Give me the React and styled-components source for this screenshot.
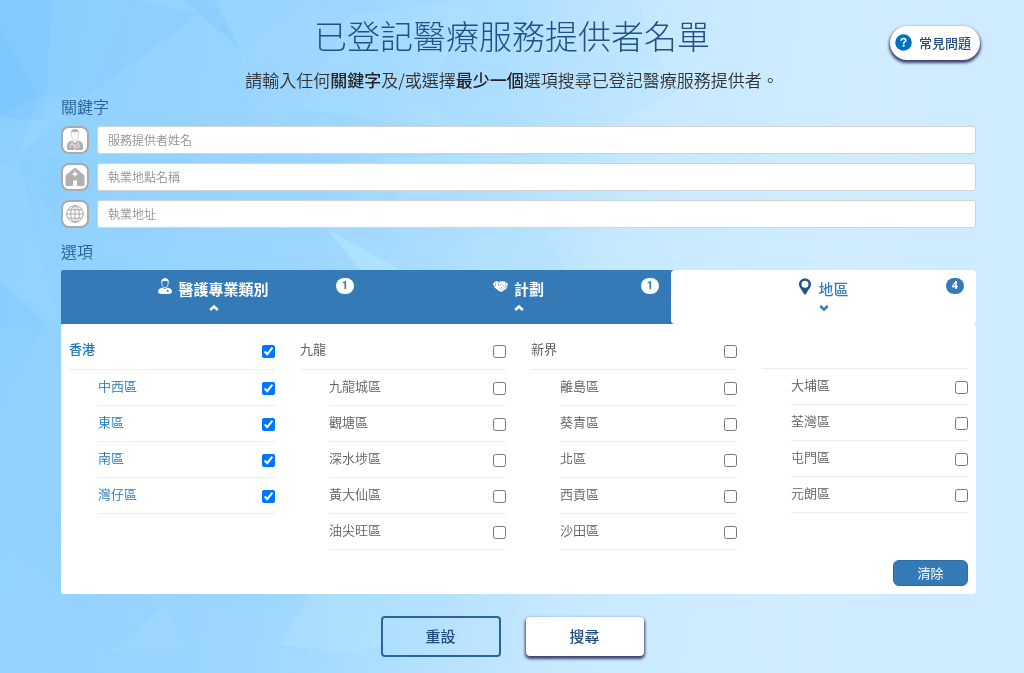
import React, { useState } from "react";
import styled, { createGlobalStyle, css } from "styled-components";

const GlobalStyle = createGlobalStyle`
  * { box-sizing: border-box; }
  body {
    margin: 0;
    background: #b4e0ff;
    font-family: "Noto Sans CJK TC", sans-serif;
    color: #333;
  }
  button, input { font-family: inherit; }
`;

const Backdrop = styled.svg`
  position: fixed;
  inset: 0;
  z-index: -1;
  width: 100%;
  height: 100%;
`;

const Header = styled.header`
  display: grid;
  grid-template-columns: 1fr auto 1fr;
  padding: 12px 44px 0;
`;

const Title = styled.h1`
  grid-column: 2;
  margin: 0;
  font-size: 33px;
  line-height: 46px;
  font-weight: 300;
  color: #1f5086;
`;

const FaqLink = styled.a`
  justify-self: end;
  margin-top: 14px;
  height: 34px;
  padding: 0 9px 2px 5px;
  display: flex;
  align-items: center;
  gap: 7px;
  border-radius: 17px;
  background: #fff;
  box-shadow: 0 2px 3px 1px #404070;
  color: #1f4d80;
  font-size: 13px;
  font-weight: 500;
  text-decoration: none;
`;

const Intro = styled.p`
  margin: 8px 0 0;
  text-align: center;
  font-size: 17px;
  line-height: 24px;
  font-weight: 350;
  strong { font-weight: 500; color: #222; }
`;

const Main = styled.main`
  padding: 0 48px 0 61px;
`;

const SectionTitle = styled.h2`
  margin: ${(p) => p.$top}px 0 0;
  font-size: 16px;
  line-height: 24px;
  font-weight: 350;
  color: #2a5f8f;
`;

const Fields = styled.div`
  display: grid;
  gap: 9px;
  margin-top: 8px;
`;

const Field = styled.label`
  display: flex;
  align-items: center;
  gap: 8px;
`;

const FieldIcon = styled.span`
  flex: none;
  width: 28px;
  height: 28px;
  display: grid;
  place-items: center;
  border: 2px solid #aaa;
  border-radius: 8px;
  background: #fff;
`;

const TextInput = styled.input`
  flex: 1;
  min-width: 0;
  height: 28px;
  padding: 0 10px 2px;
  border: 1px solid #d2d2d2;
  border-radius: 3px;
  background: #fff;
  font-size: 12px;
  &::placeholder { color: #909090; font-weight: 350; }
`;

const Tabs = styled.div`
  display: grid;
  grid-template-columns: repeat(3, 1fr);
  margin-top: 7px;
  border-radius: 3px 3px 0 0;
  background: linear-gradient(to right, #337ab7 90%, transparent 90%);
`;

const Tab = styled.button`
  position: relative;
  height: 54px;
  padding: 8px 0 0;
  display: flex;
  flex-direction: column;
  align-items: center;
  border: 0;
  border-radius: 4px;
  font-size: 15px;
  font-weight: 700;
  background: #337ab7;
  color: #fff;
  ${(p) => p.$active && css`
    background: #fff;
    color: #337ab7;
    font-weight: 500;
  `}
`;

const TabLabel = styled.span`
  display: flex;
  gap: 6px;
  line-height: 22px;
`;

const TabBadge = styled.span`
  position: absolute;
  top: 8px;
  right: 12px;
  width: 18px;
  height: 16px;
  border-radius: 8px;
  font: 700 11px/16px Roboto, sans-serif;
  text-align: center;
  background: ${(p) => (p.$active ? "#337ab7" : "#fff")};
  color: ${(p) => (p.$active ? "#fff" : "#337ab7")};
`;

const Panel = styled.section`
  padding: 0 8px 8px;
  border-radius: 3px;
  background: #fff;
`;

const Regions = styled.div`
  display: grid;
  grid-template-columns: repeat(4, 1fr);
  gap: 25px;
`;

const RegionBlank = styled.div`
  height: 45px;
  border-bottom: 1px solid #eee;
`;

const Option = styled.label`
  display: flex;
  align-items: center;
  justify-content: space-between;
  height: 36px;
  margin-left: 29px;
  padding-bottom: 4px;
  border-bottom: 1px solid #eee;
  font-size: 13px;
  font-weight: 350;
  color: ${(p) => (p.$on ? "#1f78b8" : "#606060")};
  ${(p) => p.$heading && css`
    height: 46px;
    margin-left: 0;
    padding-top: 8px;
    font-weight: ${p.$on ? 500 : 400};
  `}
  input { width: 13px; height: 13px; margin: 6px 0 0; }
`;

const PanelFooter = styled.div`
  display: flex;
  justify-content: flex-end;
  margin-top: 10px;
`;

const ClearButton = styled.button`
  width: 75px;
  height: 26px;
  padding: 0 0 2px;
  border: 1px solid #2e6da4;
  border-radius: 6px;
  background: #337ab7;
  color: #fff;
  font-size: 13px;
`;

const Actions = styled.div`
  display: flex;
  align-items: center;
  justify-content: center;
  gap: 25px;
  padding: 22px 0 16px;
`;

const ActionButton = styled.button`
  width: 120px;
  height: 41px;
  padding: 0 0 2px;
  border: 2px solid #2a649c;
  border-radius: 4px;
  background: transparent;
  color: #1f4d80;
  font-size: 15px;
  font-weight: 500;
  ${(p) => p.$raised && css`
    width: 118px;
    height: 39px;
    border-color: #fff;
    background: #fff;
    box-shadow: 0 2px 3px 1px #404070;
  `}
`;

const FACETS = [
  ["0,0 52,0 45,120 0,118", "#78c4ff", 0.4],
  ["52,0 135,0 85,98 45,120", "#84ccff", 0.4],
  ["135,0 200,14 85,98", "#84caff", 0.4],
  ["0,28 38,96 0,116", "#72c2ff", 0.4],
  ["183,0 215,0 240,50 200,14", "#7cc8ff", 0.4],
  ["38,96 85,98 17,157", "#a0daff", 0.3],
  ["0,168 17,157 58,325 0,282", "#a4dcff", 0.2],
  ["17,157 118,158 60,230", "#88ceff", 0.15],
  ["0,282 46,325 0,328", "#80caff", 0.4],
  ["0,328 46,325 0,396", "#86ceff", 0.3],
  ["62,520 10,552 62,594 0,594 0,560", "#a0daff", 0.2],
  ["0,594 70,594 52,673 0,673", "#98d6ff", 0.4],
  ["70,594 165,606 108,652", "#94d2ff", 0.2],
  ["108,652 165,606 184,647", "#a8dcff", 0.3],
  ["165,606 270,594 250,634 184,647", "#a0d8ff", 0.3],
  ["310,594 440,594 365,655 280,645", "#b8e6fa", 0.35],
  ["240,50 305,0 350,15 300,110 255,140", "#b0e0ff", 0.15],
  ["350,15 480,0 420,100 470,130 300,110", "#c0e8ff", 0.15],
  ["480,0 560,0 520,60 612,125 470,130", "#a8dcff", 0.15],
  ["560,0 640,0 650,50 520,60", "#b4e2ff", 0.25],
  ["520,60 650,50 680,90 612,125", "#b0e0ff", 0.25],
  ["380,158 480,154 640,160 400,200", "#c0eaff", 0.25],
  ["326,228 400,270 360,270", "#bce8ff", 0.5],
  ["326,228 345,228 425,270 400,270", "#a8deff", 0.3],
  ["480,228 545,228 565,270 480,270", "#b0e2fc", 0.5],
];

function PolyBackdrop() {
  return (
    <Backdrop viewBox="0 0 1024 673" preserveAspectRatio="none" aria-hidden="true">
      <defs>
        <linearGradient id="sky" gradientUnits="userSpaceOnUse" x1="0" y1="60" x2="1000" y2="240">
          <stop offset="0" stopColor="#8acfff" />
          <stop offset="0.15" stopColor="#94d3ff" />
          <stop offset="0.34" stopColor="#9cd6ff" />
          <stop offset="0.48" stopColor="#aedeff" />
          <stop offset="0.64" stopColor="#c7e9ff" />
          <stop offset="0.85" stopColor="#d1ecff" />
          <stop offset="1" stopColor="#ceebff" />
        </linearGradient>
      </defs>
      <rect width="1024" height="673" fill="url(#sky)" />
      {FACETS.map(([points, fill, opacity]) => (
        <polygon key={points} points={points} fill={fill} opacity={opacity} />
      ))}
    </Backdrop>
  );
}

const DoctorIcon = () => (
  <svg width="20" height="24" viewBox="0 0 20 24" aria-hidden="true">
    <path d="M6 6.500C5.600 3 7.200 1 10 1s4.400 2 4 5.500c-.5-1.500-1.300-2.500-2-2.700-1.500.8-3.500.6-4.700.2C6.600 4.500 6.300 5.500 6 6.500z" fill="#b4b4b4" />
    <path d="M6.400 5.500c0 4 1.600 6.500 3.600 6.500s3.600-2.500 3.600-6.500" fill="none" stroke="#ccc" strokeWidth="0.8" />
    <path d="M7.300 12.200 10 15l2.700-2.800c3.600 1 5.300 2.300 5.300 5.800V20.500q0 1.500-1.500 1.500h-13Q2 22 2 20.500V18c0-3.500 1.700-4.800 5.300-5.800z" fill="#b0b0b0" />
    <path d="M7 13.500v3.200m-2 2.800v-1.300a2 2 0 0 1 4 0v1.300M13 13.500v3m0 0a1.500 1.500 0 1 0 .1 0M10 16v6" fill="none" stroke="#fff" strokeWidth="0.7" />
  </svg>
);

const ClinicIcon = () => (
  <svg width="20" height="20" viewBox="0 0 20 20" aria-hidden="true">
    <path d="M10 1 19 8.500V18.500H12.500V13h-5v5.500H1V8.500z" fill="#b0b0b0" stroke="#b0b0b0" strokeLinejoin="round" />
    <path d="M10 4.500v5M7.500 7h5" stroke="#fff" strokeWidth="1.500" />
  </svg>
);

const GlobeIcon = () => (
  <svg width="18" height="18" viewBox="0 0 18 18" fill="none" stroke="#aaa" strokeWidth="1" aria-hidden="true">
    <circle cx="9" cy="9" r="8.300" />
    <ellipse cx="9" cy="9" rx="4.300" ry="8.300" />
    <path d="M9 .7v16.600M.7 9h16.600M2 4.800h14M2 13.200h14" />
  </svg>
);

const DoctorTabIcon = () => (
  <svg width="14" height="18" viewBox="0 0 14 18" aria-hidden="true">
    <path d="M3.800 5C3.300 2 4.500.6 7 .6S10.700 2 10.200 5c0 2.600-1.400 4.600-3.200 4.600S3.800 7.600 3.800 5z" fill="none" stroke="#fff" strokeWidth="0.8" />
    <path d="M3.600 4C3.500 1.600 4.800.4 7 .4s3.500 1.200 3.400 3.600C9 2.800 5 2.800 3.600 4z" fill="#fff" />
    <path d="M4.500 9.500 7 11l2.500-1.500c3 .8 4.500 2 4.500 4 0 2-1.500 2.500-7 2.500s-7-.5-7-2.500c0-2 1.500-3.200 4.500-4z" fill="#fff" />
    <circle cx="9.700" cy="12.800" r="1" fill="#337ab7" />
  </svg>
);

const HandshakeIcon = () => (
  <svg width="15" height="16" viewBox="0 0 15 16" aria-hidden="true">
    <path d="M0 5.500 3 3l3 1 2-.8 4 .3 3 2.300-1.500 4.700L8.500 14 6 13 1.500 9.500z" fill="#fff" />
    <path d="M6.500 4 5 7l1.500.6L8.500 6l4.500 4M8 9l2.500 2.700M6.300 10.300l2 2.200M2.800 4.500 2.300 9M12.500 4.500l.8 4.500" fill="none" stroke="#337ab7" strokeWidth="0.5" />
  </svg>
);

const PinIcon = () => (
  <svg width="14" height="18" viewBox="0 0 14 18" aria-hidden="true">
    <path fillRule="evenodd" d="M7 .5c3.500 0 6 2.500 6 5.800 0 3-2.600 5.200-4.600 9.300Q7 17.500 5.600 15.600C3.600 11.500 1 9.300 1 6.300 1 3 3.500.5 7 .5zM7 2.700a3.500 3.500 0 1 0 0 7 3.500 3.500 0 0 0 0-7z" fill="#225388" />
  </svg>
);

const Chevron = ({ up }) => (
  <svg width="10" height="16" viewBox="0 0 10 16" aria-hidden="true">
    <path d={up ? "M1.200 10 5 6.500 8.800 10" : "M1.200 6 5 9.500 8.800 6"} fill="none" stroke="currentColor" strokeWidth="2.400" />
  </svg>
);

const QuestionIcon = () => (
  <svg width="17" height="17" viewBox="0 0 17 17" aria-hidden="true">
    <circle cx="8.500" cy="8.500" r="8.300" fill="#0072bc" />
    <path d="M6.200 6.700c.1-3 4.700-2.800 4.600-.3-.1 1.600-2.200 1.500-2.200 3.300" fill="none" stroke="#fff" strokeWidth="1.700" />
    <rect x="7.700" y="10.700" width="1.900" height="1.900" fill="#fff" />
  </svg>
);

const FIELDS = [
  { name: "provider", label: "服務提供者姓名", Icon: DoctorIcon },
  { name: "place", label: "執業地點名稱", Icon: ClinicIcon },
  { name: "address", label: "執業地址", Icon: GlobeIcon },
];

const TABS = [
  { label: "醫護專業類別", count: 1, Icon: DoctorTabIcon },
  { label: "計劃", count: 1, Icon: HandshakeIcon },
  { label: "地區", count: 4, Icon: PinIcon, active: true },
];

const REGIONS = [
  { name: "香港", districts: ["中西區", "東區", "南區", "灣仔區"] },
  { name: "九龍", districts: ["九龍城區", "觀塘區", "深水埗區", "黃大仙區", "油尖旺區"] },
  { name: "新界", districts: ["離島區", "葵青區", "北區", "西貢區", "沙田區"] },
  { name: null, districts: ["大埔區", "荃灣區", "屯門區", "元朗區"] },
];

const INITIAL = ["香港", "中西區", "東區", "南區", "灣仔區"];

export default function App() {
  const [picked, setPicked] = useState(() => new Set(INITIAL));
  const toggle = (name) =>
    setPicked((prev) => {
      const next = new Set(prev);
      if (!next.delete(name)) next.add(name);
      return next;
    });
  const option = (name, heading) => (
    <Option key={name} $heading={heading} $on={picked.has(name)}>
      {name}
      <input type="checkbox" checked={picked.has(name)} onChange={() => toggle(name)} />
    </Option>
  );

  return (
    <>
      <GlobalStyle />
      <PolyBackdrop />
      <Header>
        <Title>已登記醫療服務提供者名單</Title>
        <FaqLink href="#faq">
          <QuestionIcon />
          常見問題
        </FaqLink>
      </Header>
      <Intro>
        請輸入任何<strong>關鍵字</strong>及/或選擇<strong>最少一個</strong>選項搜尋已登記醫療服務提供者。
      </Intro>
      <Main>
        <SectionTitle $top={2}>關鍵字</SectionTitle>
        <Fields>
          {FIELDS.map(({ name, label, Icon }) => (
            <Field key={name}>
              <FieldIcon><Icon /></FieldIcon>
              <TextInput type="text" name={name} placeholder={label} aria-label={label} />
            </Field>
          ))}
        </Fields>
        <SectionTitle $top={11}>選項</SectionTitle>
        <Tabs role="tablist">
          {TABS.map(({ label, count, Icon, active }) => (
            <Tab key={label} type="button" role="tab" aria-selected={!!active} $active={active}>
              <TabLabel><Icon />{label}</TabLabel>
              <Chevron up={!active} />
              <TabBadge $active={active}>{count}</TabBadge>
            </Tab>
          ))}
        </Tabs>
        <Panel>
          <Regions>
            {REGIONS.map(({ name, districts }) => (
              <div key={name || "more"}>
                {name ? option(name, true) : <RegionBlank />}
                {districts.map((d) => option(d, false))}
              </div>
            ))}
          </Regions>
          <PanelFooter>
            <ClearButton type="button" onClick={() => setPicked(new Set())}>清除</ClearButton>
          </PanelFooter>
        </Panel>
      </Main>
      <Actions>
        <ActionButton type="reset" onClick={() => setPicked(new Set(INITIAL))}>重設</ActionButton>
        <ActionButton type="submit" $raised>搜尋</ActionButton>
      </Actions>
    </>
  );
}
